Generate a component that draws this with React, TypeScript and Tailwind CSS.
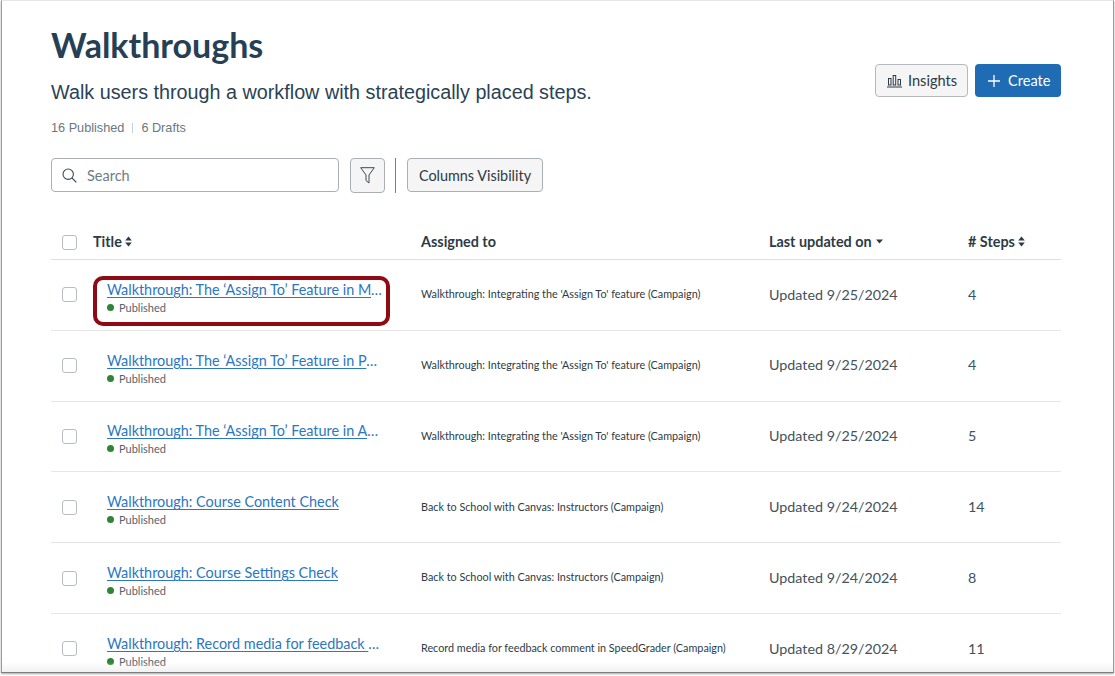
const rows = [
  { title: "Walkthrough: The ‘Assign To’ Feature in Modules", assigned: "Walkthrough: Integrating the 'Assign To' feature (Campaign)", updated: "Updated 9/25/2024", steps: "4", highlight: true },
  { title: "Walkthrough: The ‘Assign To’ Feature in Pages", assigned: "Walkthrough: Integrating the 'Assign To' feature (Campaign)", updated: "Updated 9/25/2024", steps: "4" },
  { title: "Walkthrough: The ‘Assign To’ Feature in Assignments", assigned: "Walkthrough: Integrating the 'Assign To' feature (Campaign)", updated: "Updated 9/25/2024", steps: "5" },
  { title: "Walkthrough: Course Content Check", assigned: "Back to School with Canvas: Instructors (Campaign)", updated: "Updated 9/24/2024", steps: "14" },
  { title: "Walkthrough: Course Settings Check", assigned: "Back to School with Canvas: Instructors (Campaign)", updated: "Updated 9/24/2024", steps: "8" },
  { title: "Walkthrough: Record media for feedback comment in SpeedGrader", assigned: "Record media for feedback comment in SpeedGrader (Campaign)", updated: "Updated 8/29/2024", steps: "11" },
];

function Box() {
  return <span className="block w-[15px] h-[15px] rounded-[3px] border border-[#b5bcc4] bg-white" />;
}

function Sort() {
  return (
    <svg width="7" height="11" viewBox="0 0 7 11" className="ml-[3px]" fill="#2d3b45">
      <path d="M3.5 0.5 L6.8 4.5 H0.2 Z" />
      <path d="M3.5 10.5 L6.8 6.5 H0.2 Z" />
    </svg>
  );
}

export default function App() {
  return (
    <div className="w-[1115px] h-[676px] bg-white overflow-hidden" style={{ fontFamily: "Lato, sans-serif" }}>
      <div className="relative ml-px w-[1113px] h-[673px] border-x border-b border-t border-x-[#9b9b9b] border-b-[#7d7d7d] border-t-[#e6e6e6] overflow-hidden pl-[49px] pr-[52px] shadow-[0_1px_2px_rgba(0,0,0,0.35)]">
        <div className="flex justify-between">
          <div>
            <h1 className="mt-[22px] text-[34px] leading-[44px] font-bold text-[#263f55]">Walkthroughs</h1>
            <p className="mt-[12px] text-[19.78px] leading-[26px] text-[#2b4255]" style={{ fontFamily: "'Liberation Sans', sans-serif" }}>
              Walk users through a workflow with strategically placed steps.
            </p>
            <div className="mt-[15px] flex items-center text-[12.7px] leading-[16px] text-[#6b7780]" style={{ fontFamily: "'Liberation Sans', sans-serif" }}>
              <span>16 Published</span>
              <span className="mx-[8px] h-[10px] w-px bg-[#c7cdd1]" />
              <span>6 Drafts</span>
            </div>
          </div>
          <div className="mt-[63px] flex gap-[7px] h-[33px]">
            <button className="flex items-center w-[93px] pl-[11px] rounded-[4px] border border-[#b3b9bd] bg-[#f5f5f5] text-[#2d3b45] text-[14.6px]">
              <svg width="15" height="14" viewBox="0 0 15 14" fill="none" stroke="#2d3b45" strokeWidth="1">
                <rect x="1.5" y="4.5" width="2.5" height="6.5" />
                <rect x="6.2" y="1.5" width="2.5" height="9.5" />
                <rect x="11" y="5.5" width="2.5" height="5.5" />
                <path d="M0 13 H15" />
              </svg>
              <span className="ml-[6px]">Insights</span>
            </button>
            <button className="flex items-center w-[86px] pl-[13px] rounded-[4px] bg-[#1f6cb5] text-white text-[14.6px]">
              <svg width="12" height="12" viewBox="0 0 12 12" stroke="#fff" strokeWidth="1.3">
                <path d="M6 0 V12 M0 6 H12" />
              </svg>
              <span className="ml-[8px]">Create</span>
            </button>
          </div>
        </div>

        <div className="mt-[21px] flex items-center h-[36px]">
          <div className="flex items-center w-[288px] h-[34px] rounded-[4px] border border-[#a9b0b5] bg-white pl-[10px]">
            <svg width="15" height="15" viewBox="0 0 15 15" fill="none" stroke="#3c4a54" strokeWidth="1.1">
              <circle cx="6.2" cy="6.2" r="5.2" />
              <path d="M10 10 L14.3 14.3" />
            </svg>
            <span className="ml-[10px] pt-[1px] text-[14.5px] text-[#6f7b84]">Search</span>
          </div>
          <button className="ml-[11px] flex items-center justify-center w-[35px] h-[35px] rounded-[4px] border border-[#a9b0b5] bg-[#f5f5f5]">
            <svg width="15" height="17" viewBox="0 0 15 17" fill="none" stroke="#3c4a54" strokeWidth="1">
              <path d="M0.7 0.7 H14.3 L9 8 V16 L6 13.5 V8 Z" />
            </svg>
          </button>
          <span className="ml-[10px] h-[35px] w-px bg-[#74808a]" />
          <button className="ml-[11px] w-[136px] h-[34px] rounded-[4px] border border-[#a9b0b5] bg-[#f5f5f5] pt-[1px] text-[14.4px] text-[#2d3b45]">
            Columns Visibility
          </button>
        </div>

        <div className="mt-[32px] grid grid-cols-[42px_328px_348px_199px_1fr] items-center h-[35px] border-b border-[#dcdfe3] text-[14.4px] font-bold text-[#2d3b45]">
          <div className="pl-[11px]"><Box /></div>
          <div className="flex items-center">Title<Sort /></div>
          <div>Assigned to</div>
          <div className="flex items-center">
            Last updated on
            <svg width="7" height="5" viewBox="0 0 7 5" className="ml-[4px]" fill="#2d3b45"><path d="M0 0.5 H7 L3.5 4.5 Z" /></svg>
          </div>
          <div className="flex items-center"># Steps<Sort /></div>
        </div>

        {rows.map((r, i) => (
          <div key={i} className="grid grid-cols-[42px_328px_348px_199px_1fr] items-center h-[70.8px] border-b border-[#e3e5e8]">
            <div className="pl-[11px]"><Box /></div>
            <div className="relative pl-[14px] pt-[6px]">
              {r.highlight && (
                <span className="absolute left-0 top-[1px] w-[297px] h-[50px] rounded-[10px] border-[4px] border-[#8f0b14]" />
              )}
              <a className="block w-[277px] truncate text-[14.4px] leading-[18px] text-[#2b77c2] underline underline-offset-2">{r.title}</a>
              <div className="mt-[1px] flex items-center text-[11px] leading-[15px] text-[#56636c]">
                <span className="w-[7px] h-[7px] rounded-full bg-[#2e8535]" />
                <span className="ml-[5px]">Published</span>
              </div>
            </div>
            <div className="pb-[1px] text-[10.8px] text-[#2d3b45]">{r.assigned}</div>
            <div className="pb-[1px] text-[14.3px] text-[#44525c]">{r.updated}</div>
            <div className="pb-[1px] text-[14.3px] text-[#44525c]">{r.steps}</div>
          </div>
        ))}

        <div className="absolute left-0 right-0 bottom-0 h-[10px] bg-gradient-to-b from-transparent to-[#e9e9e9]/60" />
      </div>
    </div>
  );
}
